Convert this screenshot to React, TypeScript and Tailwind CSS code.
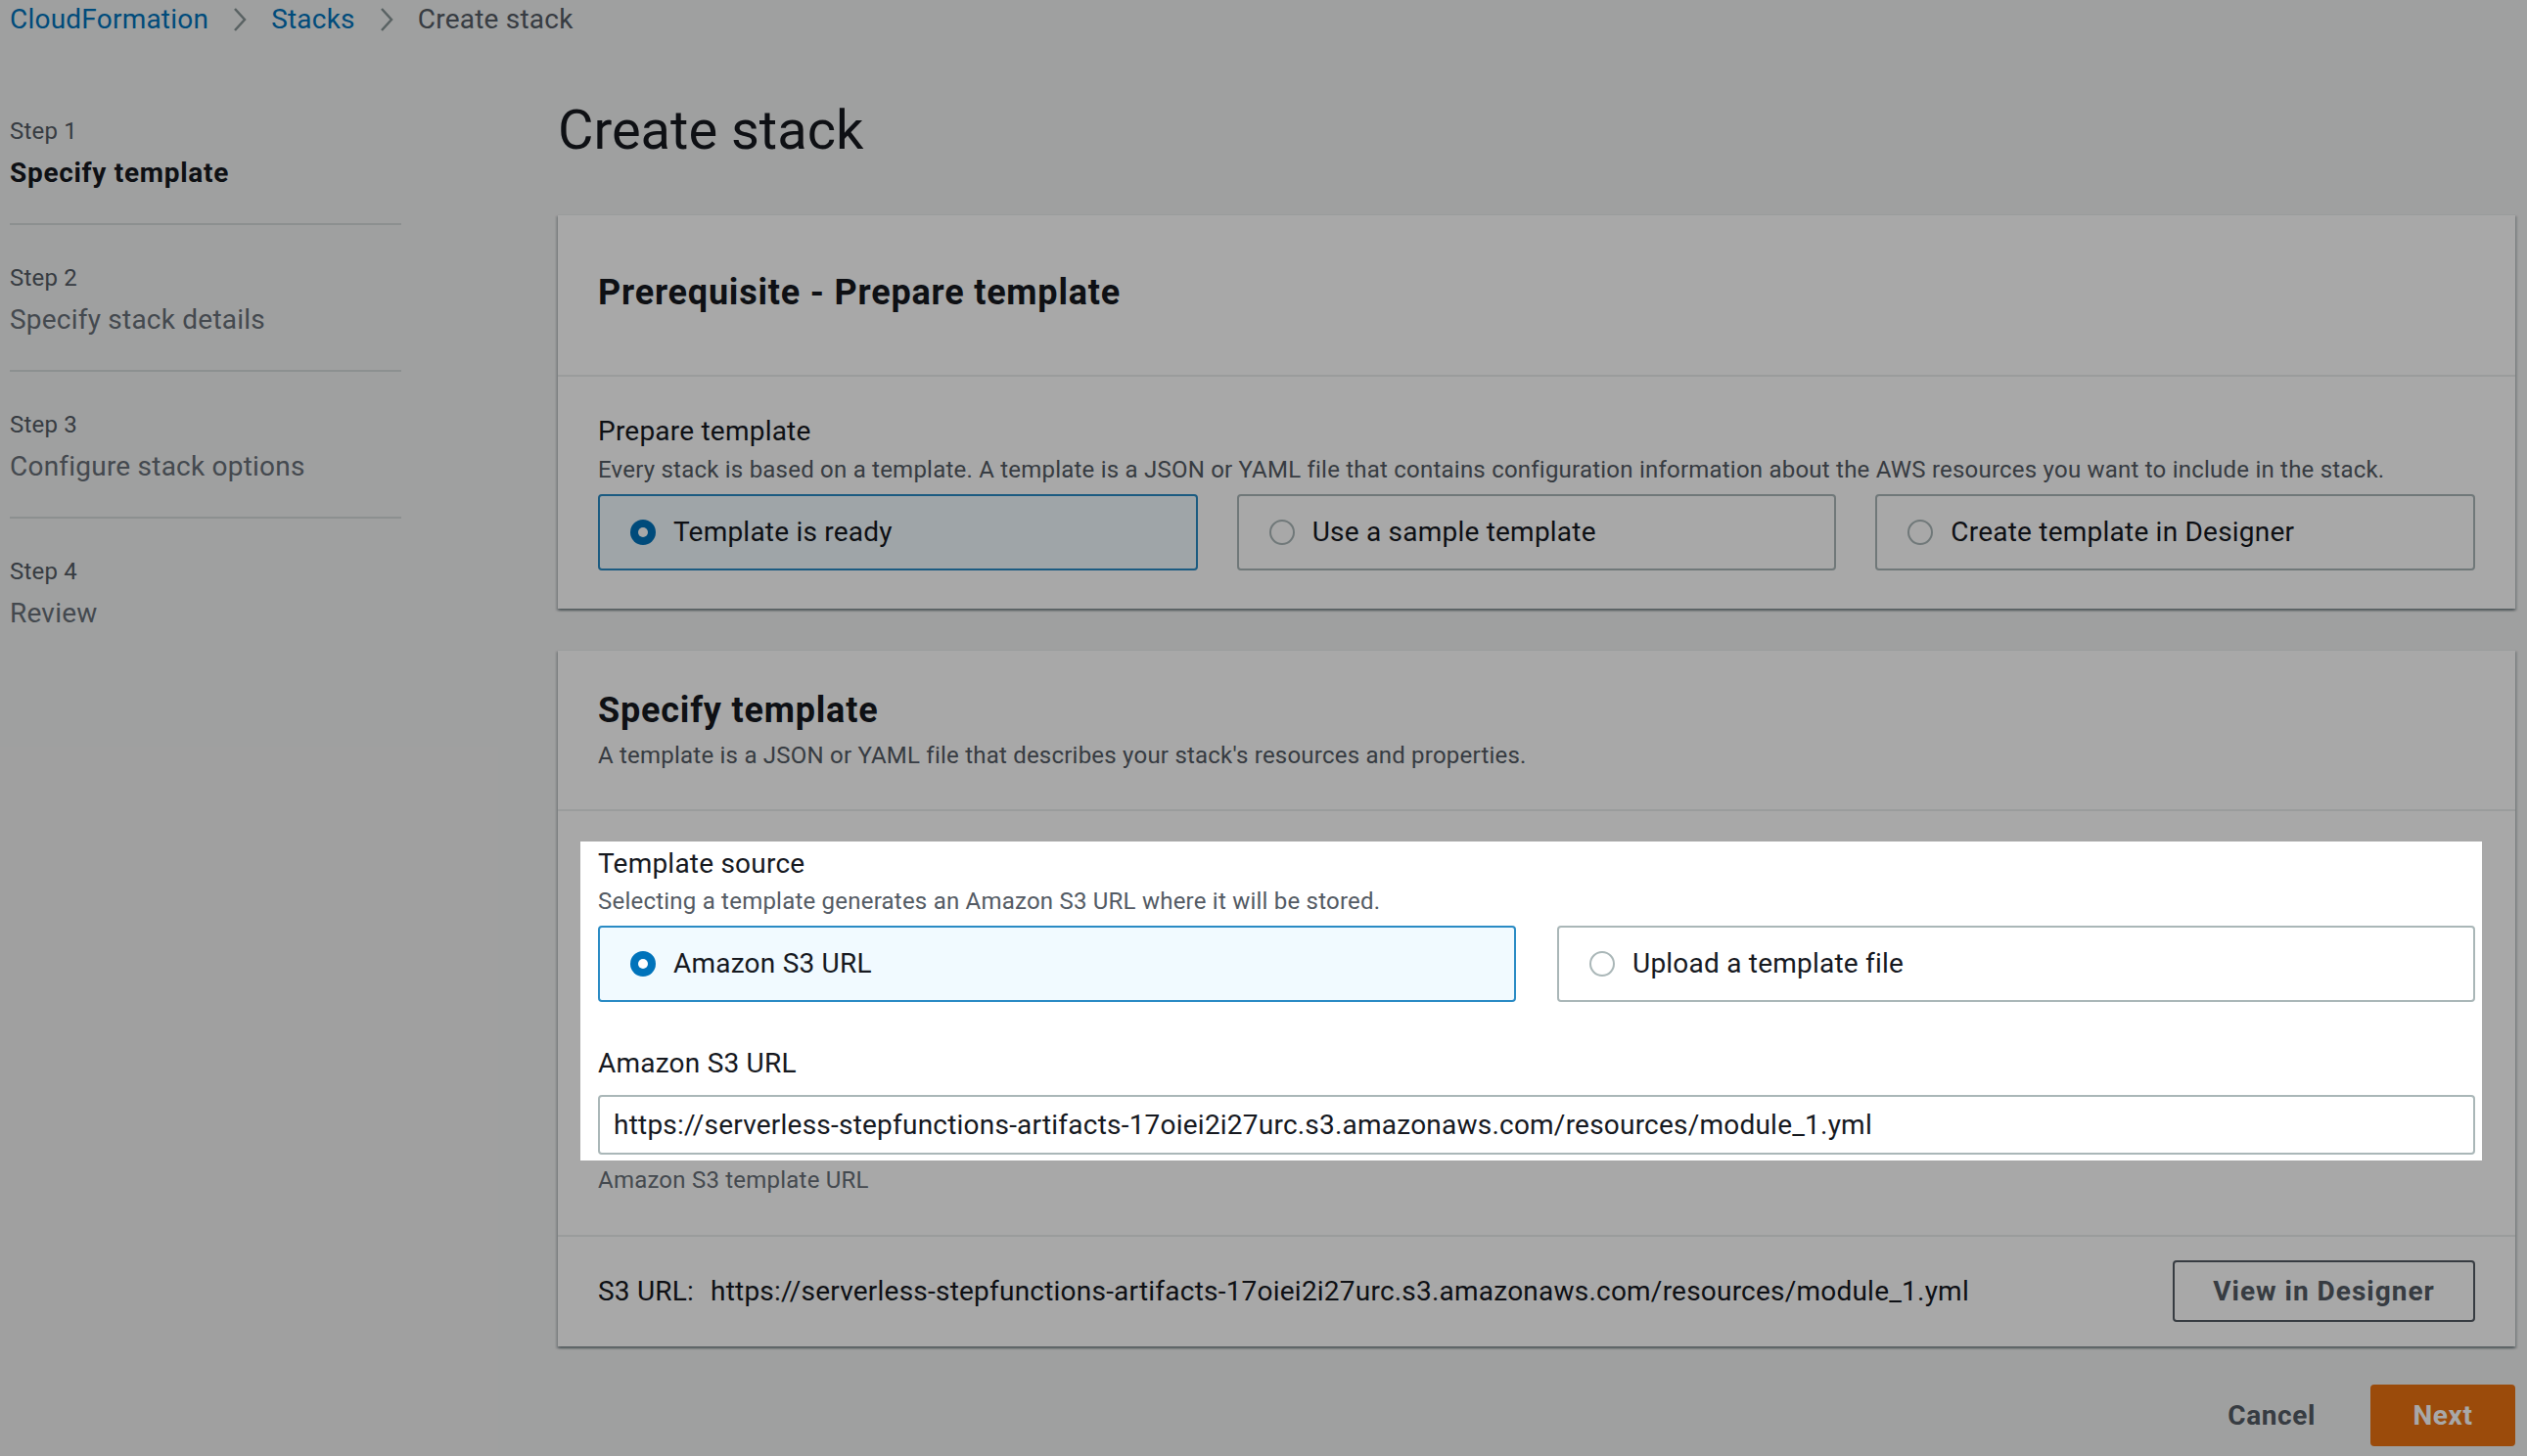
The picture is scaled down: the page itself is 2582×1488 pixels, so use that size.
import React from "react";

const steps = [
  { label: "Step 1", title: "Specify template", active: true },
  { label: "Step 2", title: "Specify stack details", active: false },
  { label: "Step 3", title: "Configure stack options", active: false },
  { label: "Step 4", title: "Review", active: false },
];

const s3Url =
  "https://serverless-stepfunctions-artifacts-17oiei2i27urc.s3.amazonaws.com/resources/module_1.yml";

function Chevron() {
  return (
    <svg width="16" height="28" viewBox="0 0 16 28" className="mx-[24px] shrink-0">
      <polyline points="3,3 13,14 3,25" fill="none" stroke="#879596" strokeWidth="2.5" />
    </svg>
  );
}

function Radio({ checked }: { checked: boolean }) {
  return checked ? (
    <svg width="26" height="26" viewBox="0 0 26 26" className="shrink-0">
      <circle cx="13" cy="13" r="13" fill="#0073bb" />
      <circle cx="13" cy="13" r="5" fill="#fff" />
    </svg>
  ) : (
    <svg width="26" height="26" viewBox="0 0 26 26" className="shrink-0">
      <circle cx="13" cy="13" r="12" fill="#fff" stroke="#aab7b8" strokeWidth="2" />
    </svg>
  );
}

function Tile({ label, checked }: { label: string; checked: boolean }) {
  return (
    <div
      className={`flex h-[78px] items-center gap-[18px] rounded-[4px] border-2 pl-[31px] text-[28px] text-[#16191f] ${
        checked ? "border-[#2a8bc4] bg-[#f1faff]" : "border-[#aab7b8] bg-white"
      }`}
    >
      <Radio checked={checked} />
      <span>{label}</span>
    </div>
  );
}

const cardShadow =
  "bg-white shadow-[0_2px_2px_0_rgba(0,28,36,0.3),2px_2px_2px_0_rgba(0,28,36,0.15),-2px_2px_2px_0_rgba(0,28,36,0.15)] border-t border-[#eaeded]";

export default function App() {
  return (
    <div className="relative h-[1488px] w-full overflow-hidden bg-[#f2f3f3] font-['Roboto',sans-serif] tracking-[0.22px] text-[#16191f]">
      {/* breadcrumb */}
      <div className="flex h-[40px] items-center pl-[10px] text-[28px]">
        <span className="text-[#0073bb]">CloudFormation</span>
        <Chevron />
        <span className="text-[#0073bb]">Stacks</span>
        <Chevron />
        <span className="text-[#545b64]">Create stack</span>
      </div>

      <div className="flex">
        {/* wizard steps */}
        <nav className="ml-[10px] w-[400px] shrink-0 pt-[78px]">
          {steps.map((s, i) => (
            <div
              key={s.label}
              className={`pb-[31px] ${i > 0 ? "border-t-2 border-[#d5dbdb] pt-[38px]" : ""}`}
            >
              <div className="text-[24px] leading-[32px] text-[#545b64]">{s.label}</div>
              <div
                className={`mt-[7px] text-[28px] leading-[40px] ${
                  s.active ? "font-bold tracking-[0.7px] text-[#16191f]" : "text-[#687078]"
                }`}
              >
                {s.title}
              </div>
            </div>
          ))}
        </nav>

        {/* main */}
        <main className="ml-[160px] mr-[12px] flex-1 pt-[61px]">
          <h1 className="text-[56px] leading-[64px] font-normal tracking-normal">Create stack</h1>

          {/* prerequisite card */}
          <section className={`mt-[54px] ${cardShadow}`}>
            <div className="border-b-2 border-[#eaeded] px-[41px] pt-[57px] pb-[62px]">
              <h2 className="text-[36px] leading-[44px] font-bold tracking-[0.8px]">
                Prerequisite - Prepare template
              </h2>
            </div>
            <div className="px-[41px] pt-[36px] pb-[39px]">
              <div className="text-[28px] leading-[40px]">Prepare template</div>
              <div className="mt-[3px] text-[24px] leading-[32px] text-[#545b64]">
                Every stack is based on a template. A template is a JSON or YAML file that contains configuration
                information about the AWS resources you want to include in the stack.
              </div>
              <div className="mt-[9px] grid grid-cols-3 gap-[40px]">
                <Tile label="Template is ready" checked />
                <Tile label="Use a sample template" checked={false} />
                <Tile label="Create template in Designer" checked={false} />
              </div>
            </div>
          </section>

          {/* specify template card */}
          <section className={`mt-[42px] ${cardShadow}`}>
            <div className="border-b-2 border-[#eaeded] px-[41px] pt-[39px] pb-[39px]">
              <h2 className="text-[36px] leading-[44px] font-bold tracking-[0.8px]">Specify template</h2>
              <div className="mt-[8px] text-[24px] leading-[32px] text-[#545b64]">
                A template is a JSON or YAML file that describes your stack's resources and properties.
              </div>
            </div>
            <div className="px-[41px] pt-[31px] pb-[40px]">
              <div className="relative z-20 -ml-[18px] -mr-[7px] bg-white pt-[3px] pr-[7px] pb-[6px] pl-[18px]">
                <div className="text-[28px] leading-[40px]">Template source</div>
                <div className="mt-[2px] text-[24px] leading-[32px] text-[#545b64]">
                  Selecting a template generates an Amazon S3 URL where it will be stored.
                </div>
                <div className="mt-[9px] grid grid-cols-2 gap-[42px]">
                  <Tile label="Amazon S3 URL" checked />
                  <Tile label="Upload a template file" checked={false} />
                </div>
                <div className="mt-[43px] text-[28px] leading-[40px]">Amazon S3 URL</div>
                <div className="mt-[12px] flex h-[61px] items-center rounded-[4px] border-2 border-[#aab7b8] pl-[14px] text-[28px]">
                  {s3Url}
                </div>
              </div>
              <div className="mt-[4px] text-[24px] leading-[32px] text-[#687078]">Amazon S3 template URL</div>
            </div>
            <div className="flex items-center justify-between border-t-2 border-[#eaeded] px-[41px] pt-[24px] pb-[25px]">
              <div className="flex text-[28px]">
                <span className="w-[115px]">S3 URL:</span>
                <span>{s3Url}</span>
              </div>
              <button className="h-[63px] w-[309px] rounded-[4px] border-2 border-[#545b64] bg-white text-[28px] font-bold tracking-[1px] text-[#545b64]">
                View in Designer
              </button>
            </div>
          </section>

          <div className="mt-[39px] flex items-center justify-end gap-[36px]">
            <button className="px-[20px] text-[28px] font-bold tracking-[0.6px] text-[#545b64]">Cancel</button>
            <button className="h-[63px] w-[148px] rounded-[4px] bg-[#ec7211] text-[28px] font-bold tracking-[0.6px] text-white">
              Next
            </button>
          </div>
        </main>
      </div>

      {/* dimming overlay */}
      <div className="absolute inset-0 z-10 bg-black/[0.34]" />
    </div>
  );
}
